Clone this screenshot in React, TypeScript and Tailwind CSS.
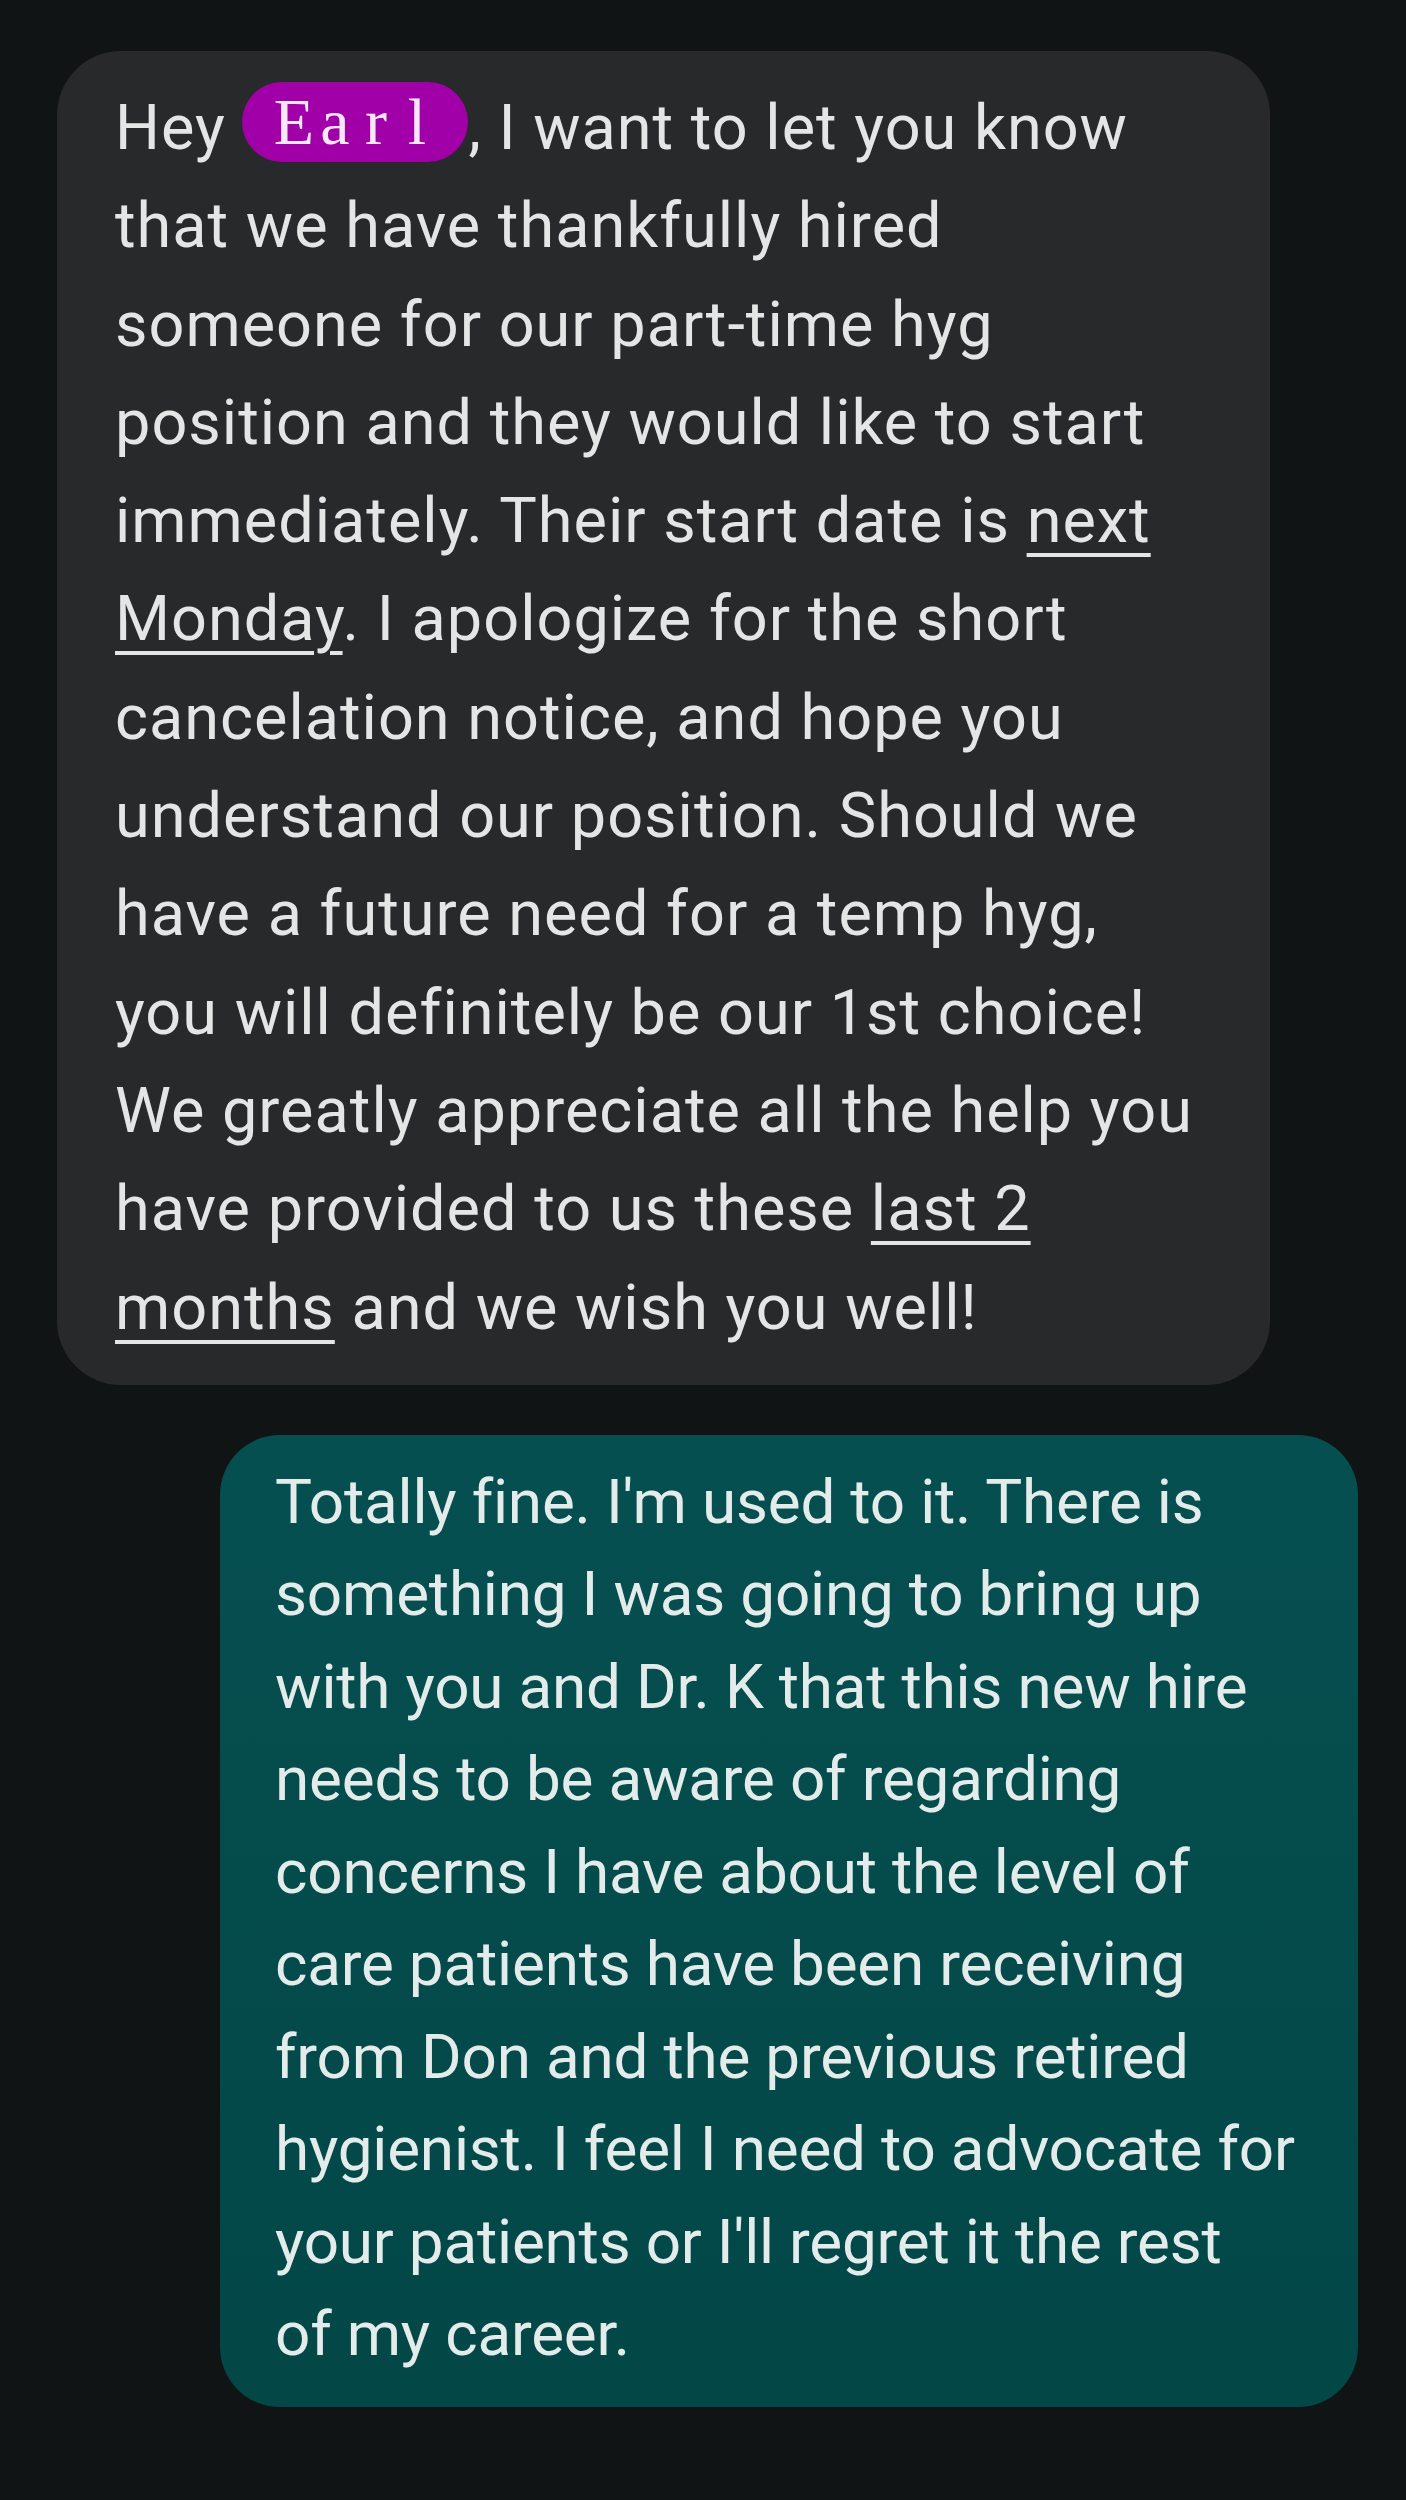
const Mention = ({ name }: { name: string }) => (
  <span className="inline-block h-[80px] rounded-full bg-[#a100a9] px-[31px] align-[5px] font-['Liberation_Serif',serif] text-[66px] leading-[80px] tracking-normal text-[#f6e8f6]">
    {name.split("").map((ch, i) => (
      <span key={i} className="inline-block w-[41px] text-center">
        {ch}
      </span>
    ))}
  </span>
);

const ul = "decoration-[4px] underline-offset-[11px]";

const incoming: React.ReactNode[] = [
  <>
    Hey <Mention name="Earl" />, I want to let you know
  </>,
  "that we have thankfully hired",
  "someone for our part-time hyg",
  "position and they would like to start",
  <>
    immediately. Their start date is <u className={ul}>next</u>
  </>,
  <>
    <u className={ul}>Monday</u>. I apologize for the short
  </>,
  "cancelation notice, and hope you",
  "understand our position. Should we",
  "have a future need for a temp hyg,",
  "you will definitely be our 1st choice!",
  "We greatly appreciate all the help you",
  <>
    have provided to us these <u className={ul}>last 2</u>
  </>,
  <>
    <u className={ul}>months</u> and we wish you well!
  </>,
];

const outgoing = [
  "Totally fine. I'm used to it. There is",
  "something I was going to bring up",
  "with you and Dr. K that this new hire",
  "needs to be aware of regarding",
  "concerns I have about the level of",
  "care patients have been receiving",
  "from Don and the previous retired",
  "hygienist. I feel I need to advocate for",
  "your patients or I'll regret it the rest",
  "of my career.",
];

export default function App() {
  return (
    <div className="min-h-[2500px] w-[1406px] bg-[#101415] pt-[51px] font-['Roboto',sans-serif]">
      {/* received message */}
      <div className="ml-[57px] w-[1213px] rounded-[64px] bg-[#27292b] px-[58px] pt-[28px] pb-[28px] text-[63px] leading-[98.3px] tracking-[1px] text-[#e4e6e5]">
        {incoming.map((line, i) => (
          <div key={i} className="whitespace-nowrap">
            {line}
          </div>
        ))}
      </div>

      {/* sent message */}
      <div className="mt-[50px] ml-[220px] w-[1138px] rounded-[60px] bg-gradient-to-b from-[#064f50] to-[#034747] px-[55px] pt-[21px] pb-[26px] text-[62px] leading-[92.5px] tracking-[-0.2px] text-[#e3ecea]">
        {outgoing.map((line, i) => (
          <div key={i} className="whitespace-nowrap">
            {line}
          </div>
        ))}
      </div>
    </div>
  );
}
